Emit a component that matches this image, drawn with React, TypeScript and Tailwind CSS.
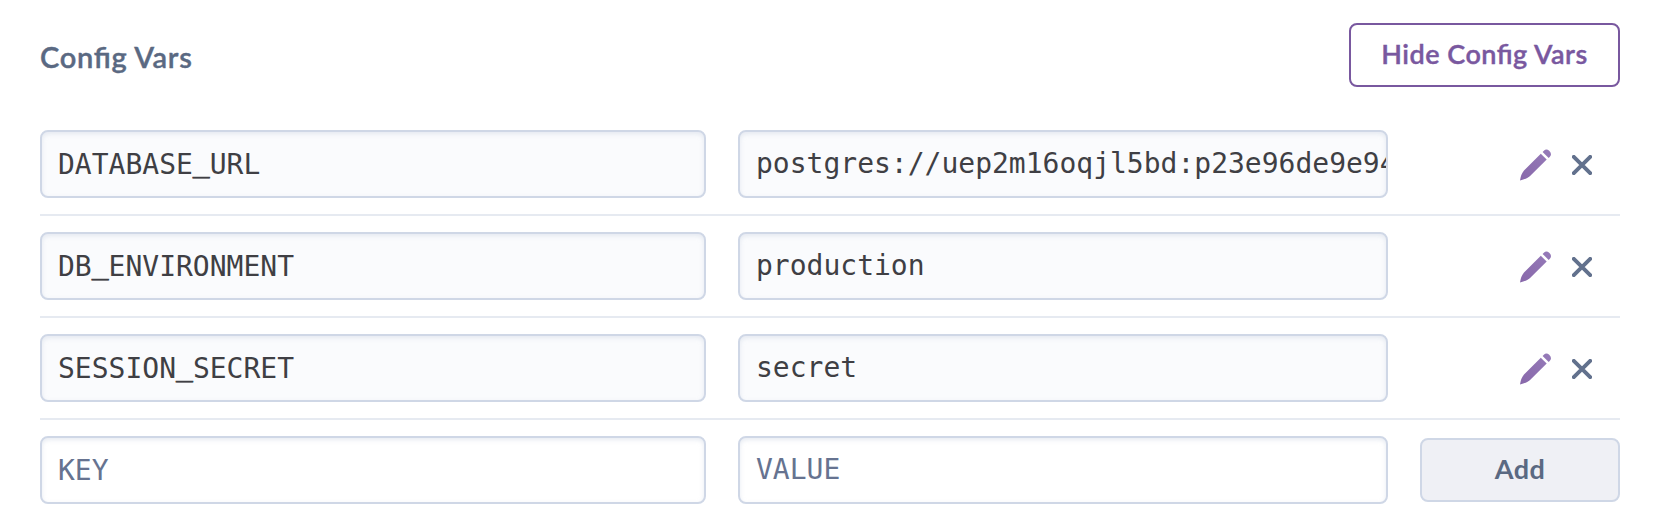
import { Fragment } from "react";

type ConfigVar = { name: string; value: string };

const configVars: ConfigVar[] = [
  { name: "DATABASE_URL", value: "postgres://uep2m16oqjl5bd:p23e96de9e94" },
  { name: "DB_ENVIRONMENT", value: "production" },
  { name: "SESSION_SECRET", value: "secret" },
];

const fieldClass =
  "h-[68px] rounded-lg border-2 border-[#cfd7e6] px-4 font-['DejaVu_Sans_Mono',monospace] text-[28px] whitespace-nowrap overflow-hidden shadow-[inset_0_2px_4px_rgba(207,215,230,0.5)]";

function PencilIcon() {
  return (
    <svg width="32" height="32" viewBox="0 0 32 32" aria-hidden="true">
      <defs>
        <linearGradient id="pencil" x1="1" y1="0" x2="0" y2="1">
          <stop offset="0" stopColor="#967bb9" />
          <stop offset="1" stopColor="#8868aa" />
        </linearGradient>
      </defs>
      <path
        fill="url(#pencil)"
        d="M0 31.4 Q1 25 4 21.6 L20.8 4.8 L26.7 10.6 L9.8 27.2 Q6.4 30.2 0 31.4 Z M22.6 2.9 L23.6 1.9 Q26.4 -0.8 29.2 1.8 Q32.4 4.8 29.9 7.7 L28.7 8.9 Z"
      />
    </svg>
  );
}

function CloseIcon() {
  return (
    <svg width="20" height="20" viewBox="0 0 20 20" aria-hidden="true">
      <path d="M1.8 1.8 L18.2 18.2 M18.2 1.8 L1.8 18.2" stroke="#62718d" strokeWidth="3.9" strokeLinecap="round" />
    </svg>
  );
}

function KeyName({ name }: { name: string }) {
  return (
    <>
      {name.split("_").map((part, i) => (
        <Fragment key={part}>
          {i > 0 && <span className="align-[3px] leading-none [-webkit-text-stroke:0.8px_#3f3f44]">_</span>}
          {part}
        </Fragment>
      ))}
    </>
  );
}

export default function App() {
  return (
    <main className="h-[532px] w-[1666px] bg-white pl-10 pr-[46px] pt-[23px] font-['Lato',sans-serif]">
      <header className="flex h-[91px] items-start justify-between">
        <h1 className="pt-4 text-[29px] leading-[36px] font-semibold tracking-[0.7px] text-[#5a6982] [-webkit-text-stroke:0.4px_#5a6982] [font-feature-settings:'liga'_1]">
          Config Vars
        </h1>
        <button className="h-16 w-[271px] rounded-lg border-2 border-[#79589f] pb-1 text-[27px] leading-none font-semibold tracking-[0.5px] text-[#79589f] [-webkit-text-stroke:0.4px_#79589f] [font-feature-settings:'liga'_1]">
          Hide Config Vars
        </button>
      </header>
      {configVars.map((item) => (
        <div key={item.name} className="flex h-[102px] items-start border-b-2 border-[#e6eaf1] pt-4">
          <div className={`${fieldClass} w-[666px] bg-[#fafbfd] leading-[66px] text-[#3f3f44]`}>
            <KeyName name={item.name} />
          </div>
          <div className={`${fieldClass} ml-8 w-[650px] bg-[#fafbfd] leading-[64px] text-[#3f3f44]`}>{item.value}</div>
          <div className="ml-auto flex h-[68px] items-center gap-5 pr-7 pt-0.5">
            <button aria-label="Edit">
              <PencilIcon />
            </button>
            <button aria-label="Delete">
              <CloseIcon />
            </button>
          </div>
        </div>
      ))}
      <div className="flex items-start pt-4">
        <input
          className={`${fieldClass} w-[666px] placeholder:text-[#667390] placeholder:opacity-100`}
          placeholder="KEY"
        />
        <input
          className={`${fieldClass} ml-8 w-[650px] pb-0.5 placeholder:text-[#667390] placeholder:opacity-100`}
          placeholder="VALUE"
        />
        <button className="mt-0.5 ml-8 h-16 w-[200px] rounded-lg border-2 border-[#cfd7e6] bg-[#eff0f5] pb-[3px] text-[27px] leading-none font-bold tracking-[0.5px] text-[#5a6982]">
          Add
        </button>
      </div>
    </main>
  );
}
